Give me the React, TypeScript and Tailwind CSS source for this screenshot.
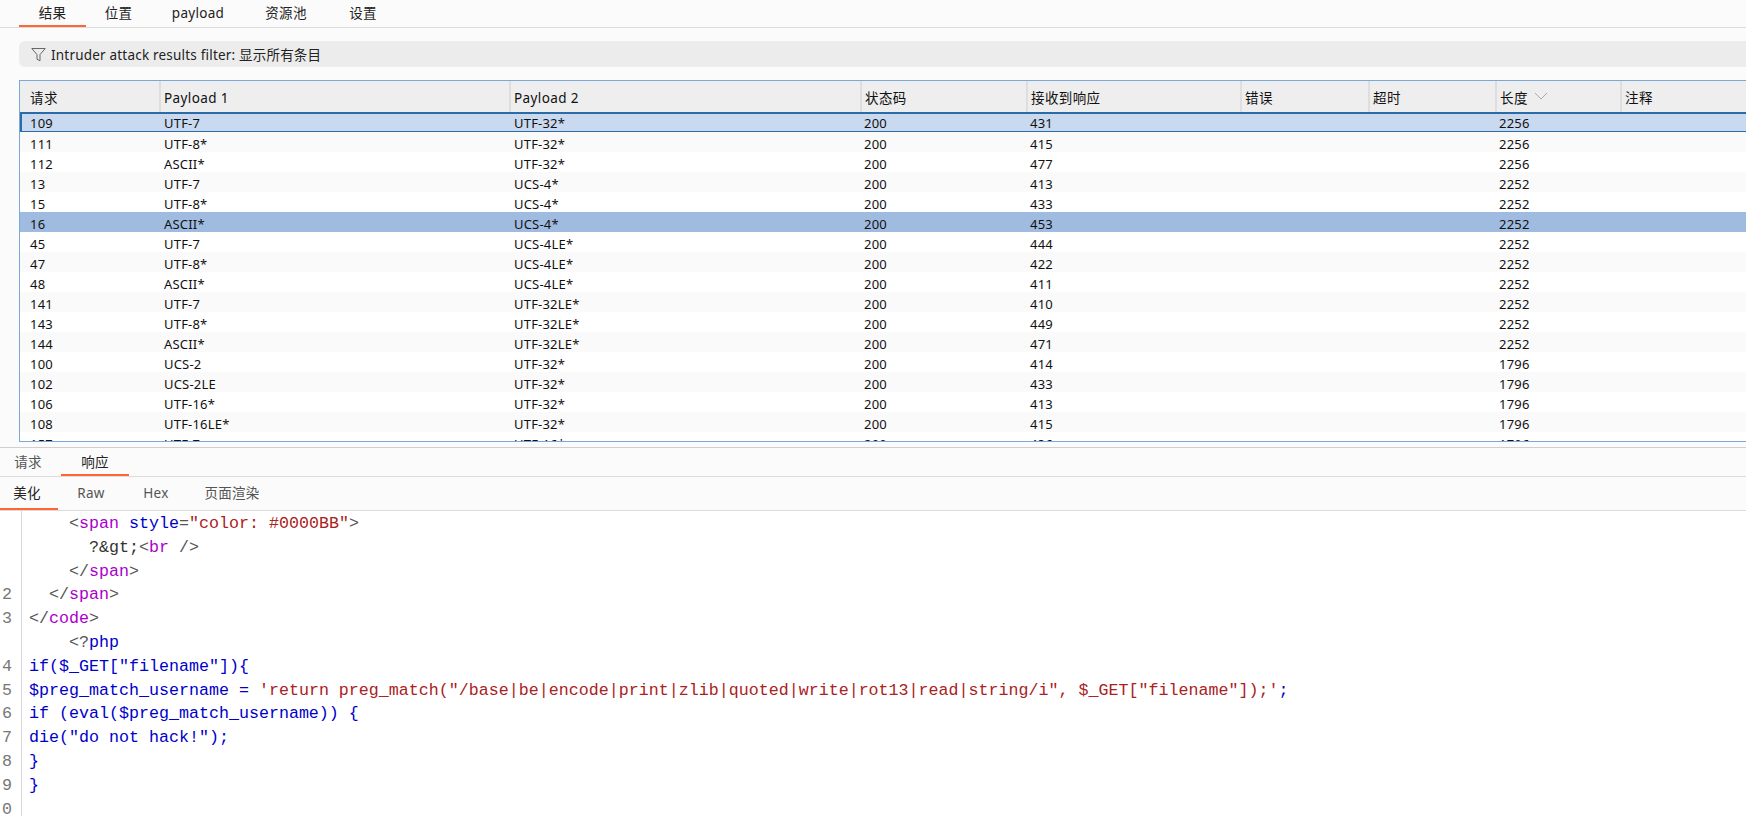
const FONT = "font-['Noto_Sans','Noto_Sans_CJK_SC',sans-serif]"

const columns = ['请求', 'Payload 1', 'Payload 2', '状态码', '接收到响应', '错误', '超时', '长度', '注释']

const rows = [
  ['109', 'UTF-7', 'UTF-32*', '200', '431', '2256'],
  ['111', 'UTF-8*', 'UTF-32*', '200', '415', '2256'],
  ['112', 'ASCII*', 'UTF-32*', '200', '477', '2256'],
  ['13', 'UTF-7', 'UCS-4*', '200', '413', '2252'],
  ['15', 'UTF-8*', 'UCS-4*', '200', '433', '2252'],
  ['16', 'ASCII*', 'UCS-4*', '200', '453', '2252'],
  ['45', 'UTF-7', 'UCS-4LE*', '200', '444', '2252'],
  ['47', 'UTF-8*', 'UCS-4LE*', '200', '422', '2252'],
  ['48', 'ASCII*', 'UCS-4LE*', '200', '411', '2252'],
  ['141', 'UTF-7', 'UTF-32LE*', '200', '410', '2252'],
  ['143', 'UTF-8*', 'UTF-32LE*', '200', '449', '2252'],
  ['144', 'ASCII*', 'UTF-32LE*', '200', '471', '2252'],
  ['100', 'UCS-2', 'UTF-32*', '200', '414', '1796'],
  ['102', 'UCS-2LE', 'UTF-32*', '200', '433', '1796'],
  ['106', 'UTF-16*', 'UTF-32*', '200', '413', '1796'],
  ['108', 'UTF-16LE*', 'UTF-32*', '200', '415', '1796'],
  ['157', 'UTF-7', 'UTF-16*', '200', '436', '1796'],
]

const GRID = 'grid grid-cols-[139px_350px_351px_166px_214px_128px_127px_125px_1fr]'

function Cell({ children, className = 'pl-[4px]' }: { children?: React.ReactNode; className?: string }) {
  return <div className={`${className} whitespace-nowrap overflow-hidden`}>{children}</div>
}

function TopTab({ label, active, className }: { label: string; active?: boolean; className: string }) {
  return (
    <div className={`flex items-center justify-center h-full pt-[2px] text-[13.5px] tracking-[0.3px] text-[#222] border-b-2 ${active ? 'border-[#ff6633]' : 'border-transparent'} ${className}`}>
      {label}
    </div>
  )
}

function SubTab({ label, active, className }: { label: string; active?: boolean; className: string }) {
  return (
    <div className={`flex items-center justify-center h-full pt-[2px] text-[13.5px] tracking-[0.3px] border-b-2 ${active ? 'border-[#ff6633] text-[#222]' : 'border-transparent text-[#555]'} ${className}`}>
      {label}
    </div>
  )
}

const G = ({ children }: { children: React.ReactNode }) => <span className="text-[#555]">{children}</span>
const T = ({ children }: { children: React.ReactNode }) => <span className="text-[#aa00cc]">{children}</span>
const B = ({ children }: { children: React.ReactNode }) => <span className="text-[#0000cc]">{children}</span>
const R = ({ children }: { children: React.ReactNode }) => <span className="text-[#aa2222]">{children}</span>

const codeLines: { no: string; code: React.ReactNode }[] = [
  { no: '', code: <>{'    '}<G>{'<'}</G><T>span</T> <B>style</B><G>=</G><R>"color: #0000BB"</R><G>{'>'}</G></> },
  { no: '', code: <>{'      '}<span className="text-[#333]">?&amp;gt;</span><G>{'<'}</G><T>br</T> <G>{'/>'}</G></> },
  { no: '', code: <>{'    '}<G>{'</'}</G><T>span</T><G>{'>'}</G></> },
  { no: '2', code: <>{'  '}<G>{'</'}</G><T>span</T><G>{'>'}</G></> },
  { no: '3', code: <><G>{'</'}</G><T>code</T><G>{'>'}</G></> },
  { no: '', code: <>{'    '}<G>{'<?'}</G><B>php</B></> },
  { no: '4', code: <B>{'if($_GET["filename"]){'}</B> },
  { no: '5', code: <><B>{'$preg_match_username = '}</B><R>{'\'return preg_match("/base|be|encode|print|zlib|quoted|write|rot13|read|string/i", $_GET["filename"]);\''}</R><B>;</B></> },
  { no: '6', code: <B>{'if (eval($preg_match_username)) {'}</B> },
  { no: '7', code: <B>{'die("do not hack!");'}</B> },
  { no: '8', code: <B>{'}'}</B> },
  { no: '9', code: <B>{'}'}</B> },
  { no: '0', code: '' },
]

export default function App() {
  return (
    <div className={`flex flex-col w-[1746px] h-[816px] overflow-hidden bg-[#fbfbfb] ${FONT}`}>
      {/* top tabs */}
      <div className="flex h-[28px] shrink-0 pl-[19px] border-b border-[#dcdcdc]">
        <TopTab label="结果" active className="w-[67px]" />
        <TopTab label="位置" className="w-[65px]" />
        <TopTab label="payload" className="w-[94px]" />
        <TopTab label="资源池" className="w-[82px]" />
        <TopTab label="设置" className="w-[72px]" />
      </div>

      {/* filter bar */}
      <div className="flex items-center gap-[5px] h-[26px] shrink-0 mt-[13px] ml-[19px] pl-[12px] bg-[#ececec] rounded-l-md text-[13.5px] tracking-[0.2px] text-[#222]">
        <svg width="15" height="15" viewBox="0 0 15 15" fill="none" stroke="#666" strokeWidth="1">
          <path d="M0.8 1.5h13.4L9 7.6v6.2l-3-1.6V7.6z" strokeLinejoin="round" />
        </svg>
        <span className="mt-[2px]">Intruder attack results filter: 显示所有条目</span>
      </div>

      {/* results table */}
      <div className="h-[362px] shrink-0 mt-[13px] ml-[19px] border-l border-t border-b border-[#7ba7d9] overflow-hidden text-[13px] tracking-[0.2px] text-[#111]">
        <div className={`${GRID} h-[31px] items-center bg-[#eeeeee]`}>
          {columns.map((c, i) => (
            <div key={c} className={`flex items-center h-full pt-[4px] text-[13.5px] tracking-[0.4px] ${i > 0 ? 'border-l-2 border-[#dedede] pl-[2px]' : 'pl-[9px]'}`}>
              <span className="pl-[1px]">{c}</span>
              {c === '长度' && (
                <svg width="14" height="8" viewBox="0 0 14 8" fill="none" stroke="#aaa" strokeWidth="1" className="ml-[6px] mb-[6px]">
                  <path d="M1 1l6 6 6-6" />
                </svg>
              )}
            </div>
          ))}
        </div>
        {rows.map((r, i) => {
          const stripe =
            i === 0
              ? 'bg-[#c9d9ef] border-t-2 border-b border-[#2c6ba6] shadow-[inset_2px_0_0_#2c6ba6]'
              : i === 5
                ? 'bg-[#9fbbe0]'
                : i % 2 === 1
                  ? 'bg-[#fafafa]'
                  : 'bg-white'
          return (
            <div key={r[0]} className={`${GRID} h-[20px] items-center leading-[18px] ${i === 0 ? 'pt-[1px]' : 'pt-[3px]'} ${stripe}`}>
              <Cell className="pl-[10px]">{r[0]}</Cell>
              <Cell className="pl-[5px]">{r[1]}</Cell>
              <Cell className="pl-[5px]">{r[2]}</Cell>
              <Cell>{r[3]}</Cell>
              <Cell>{r[4]}</Cell>
              <Cell />
              <Cell />
              <Cell>{r[5]}</Cell>
              <Cell />
            </div>
          )
        })}
      </div>

      <div className="h-[3px] shrink-0 mt-[3px] border-b border-[#cfcfcf]" />

      {/* request / response tabs */}
      <div className="flex h-[29px] shrink-0 border-b border-[#dcdcdc]">
        <SubTab label="请求" className="w-[56px] text-[#222]" />
        <SubTab label="响应" active className="w-[68px] ml-[5px]" />
      </div>

      {/* view tabs */}
      <div className="flex h-[34px] shrink-0 border-b border-[#dcdcdc]">
        <SubTab label="美化" active className="w-[58px] pr-[4px]" />
        <SubTab label="Raw" className="w-[66px]" />
        <SubTab label="Hex" className="w-[64px]" />
        <SubTab label="页面渲染" className="w-[88px]" />
      </div>

      {/* editor */}
      <div className="flex flex-1 min-h-0 overflow-hidden bg-white font-['Liberation_Mono',monospace] text-[16.67px] leading-[23.8px]">
        <div className="w-[22px] shrink-0 border-r border-[#d8d8d8] pl-[2px] pt-[1px] text-[#777] overflow-hidden">
          {codeLines.map((l, i) => (
            <div key={i} className="h-[23.8px]">{l.no}</div>
          ))}
        </div>
        <div className="flex-1 pl-[7px] pt-[1px] whitespace-pre">
          {codeLines.map((l, i) => (
            <div key={i} className="h-[23.8px]">{l.code}</div>
          ))}
        </div>
      </div>
    </div>
  )
}
